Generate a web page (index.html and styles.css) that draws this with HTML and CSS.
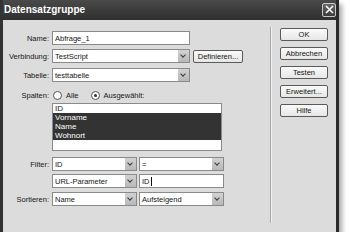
FILE: index.html
```
<!DOCTYPE html>
<html lang="de">

<head>
  <link rel="stylesheet" href="styles.css">
</head>

<body>
  <div class="window">
    <div class="titlebar">
      <span class="title">Datensatzgruppe</span>
      <span class="close">
        <svg width="9" height="9" viewBox="0 0 9 9">
          <path d="M1 1 L8 8 M8 1 L1 8" stroke="#fff" stroke-width="1.6" fill="none" />
        </svg>
      </span>
    </div>
    <div class="client">
      <div class="form">
        <div class="row row-name">
          <label class="label">Name:</label>
          <div class="field text wide">Abfrage_1</div>
        </div>
        <div class="row row-conn">
          <label class="label">Verbindung:</label>
          <div class="field select wide"><span class="value">TestScript</span><span class="arrow"></span></div>
          <button class="btn define">Definieren...</button>
        </div>
        <div class="row row-table">
          <label class="label">Tabelle:</label>
          <div class="field select wide"><span class="value">testtabelle</span><span class="arrow"></span></div>
        </div>
        <div class="row row-cols">
          <label class="label">Spalten:</label>
          <span class="radio"></span><span class="radio-text">Alle</span>
          <span class="radio checked"></span><span class="radio-text">Ausgewählt:</span>
        </div>
        <div class="row row-list">
          <span class="label"></span>
          <div class="listbox">
            <div class="item">ID</div>
            <div class="item selected">Vorname</div>
            <div class="item selected">Name</div>
            <div class="item selected">Wohnort</div>
          </div>
        </div>
        <div class="row row-filter">
          <label class="label">Filter:</label>
          <div class="field select half"><span class="value">ID</span><span class="arrow"></span></div>
          <div class="field select half"><span class="value">=</span><span class="arrow"></span></div>
        </div>
        <div class="row row-param">
          <span class="label"></span>
          <div class="field select half"><span class="value">URL-Parameter</span><span class="arrow"></span></div>
          <div class="field text half">ID<span class="caret"></span></div>
        </div>
        <div class="row row-sort">
          <label class="label">Sortieren:</label>
          <div class="field select half"><span class="value">Name</span><span class="arrow"></span></div>
          <div class="field select half"><span class="value">Aufsteigend</span><span class="arrow"></span></div>
        </div>
      </div>
      <div class="divider"></div>
      <div class="actions">
        <button class="btn action">OK</button>
        <button class="btn action">Abbrechen</button>
        <button class="btn action">Testen</button>
        <button class="btn action">Erweitert...</button>
        <button class="btn action">Hilfe</button>
      </div>
    </div>
  </div>
</body>

</html>
```

FILE: styles.css
```
body {
  margin: 0;
  background-color: #ffffff;
  font-family: 'Liberation Sans', Arial, sans-serif;
  font-size: 7.5px;
  color: #161616;
}

/* dialog frame */
.window {
  width: 333px;
  height: 232px;
  background-color: #3a3a3a;
  border-right: 3px solid #2a2a2a;
  border-left: 3px solid #333;
  box-shadow: 3px 4px 5px rgba(0, 0, 0, 0.35);
  display: flex;
  flex-direction: column;
}

.titlebar {
  height: 20px;
  flex: none;
  display: flex;
  align-items: center;
  justify-content: space-between;
  background: linear-gradient(#4a4a4a, #2f2f2f);
}

.title {
  color: #ffffff;
  font-size: 10px;
  font-weight: bold;
  margin-left: 1px;
  margin-top: -1px;
}

.close {
  width: 12px;
  height: 12px;
  margin-top: -1px;
  border: 1px solid #c8c8c8;
  border-radius: 2px;
  background: linear-gradient(#6a6a6a, #3c3c3c);
  display: flex;
  align-items: center;
  justify-content: center;
}

.client {
  flex: 1;
  display: flex;
  background-color: #dcdcdc;
}

/* left form */
.form {
  width: 267px;
  flex: none;
  padding-top: 11px;
}

.row {
  display: flex;
  align-items: center;
  height: 14px;
}

.row-conn { margin-top: 4px; }
.row-table { margin-top: 5px; }
.row-cols { margin-top: 6px; }
.row-list { margin-top: 1px; height: auto; align-items: flex-start; }
.row-filter { margin-top: 6px; }
.row-param { margin-top: 3px; }
.row-sort { margin-top: 4px; }

.label {
  width: 46px;
  flex: none;
  text-align: right;
  margin-right: 3px;
}

.field {
  height: 14px;
  box-sizing: border-box;
  border: 1px solid #8a8a8a;
  background-color: #ffffff;
  display: flex;
  align-items: center;
  padding-left: 2px;
}

.wide { width: 138px; }
.half { width: 85px; margin-right: 2px; }

.select .value {
  flex: 1;
}

.arrow {
  width: 11px;
  height: 12px;
  background: linear-gradient(#d2d2d2, #b8b8b8);
  position: relative;
}

.arrow::after {
  content: '';
  position: absolute;
  left: 3px;
  top: 3px;
  width: 3px;
  height: 3px;
  border-right: 1.5px solid #3a3a3a;
  border-bottom: 1.5px solid #3a3a3a;
  transform: rotate(45deg);
}

.caret {
  display: inline-block;
  width: 1px;
  height: 9px;
  background-color: #111;
  margin-left: 1px;
}

.btn {
  font-family: 'Liberation Sans', Arial, sans-serif;
  font-size: 7.5px;
  color: #161616;
  padding: 0;
  box-sizing: border-box;
  border: 1px solid #5a5a5a;
  border-radius: 2px;
  background: linear-gradient(#fafafa, #e6e6e6);
}

.define {
  width: 50px;
  height: 13px;
  margin-left: 3px;
}

/* radios */
.radio {
  width: 9px;
  height: 9px;
  box-sizing: border-box;
  border: 1px solid #555;
  border-radius: 50%;
  background-color: #ffffff;
  margin-left: 1px;
  position: relative;
}

.radio.checked::after {
  content: '';
  position: absolute;
  left: 2px;
  top: 2px;
  width: 3px;
  height: 3px;
  border-radius: 50%;
  background-color: #333;
}

.radio-text {
  margin-left: 4px;
  margin-right: 11px;
}

.listbox {
  width: 170px;
  height: 48px;
  box-sizing: border-box;
  border: 1px solid #8a8a8a;
  background-color: #ffffff;
}

.item {
  height: 9px;
  line-height: 9px;
  padding-left: 2px;
  font-size: 8px;
}

.item.selected {
  background-color: #333333;
  color: #ffffff;
}

/* right side */
.divider {
  width: 1px;
  margin: 7px 0 9px 0;
  background-color: #a8a8a8;
  border-right: 1px solid #f2f2f2;
}

.actions {
  display: flex;
  flex-direction: column;
  gap: 6px;
  padding-top: 8px;
  padding-left: 8px;
}

.action {
  width: 48px;
  height: 13px;
}
```
